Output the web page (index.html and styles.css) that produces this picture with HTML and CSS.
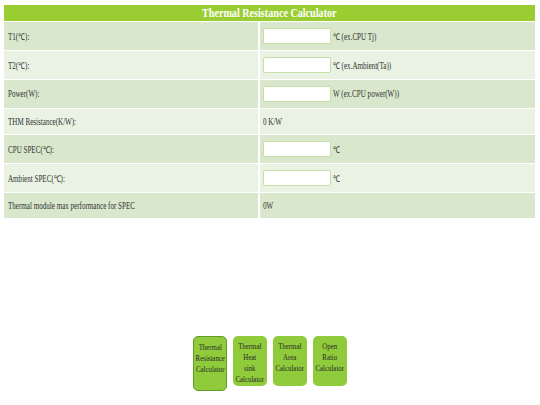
FILE: index.html
```html
<!DOCTYPE html>
<html>
<head>
<meta charset="utf-8">
<link rel="stylesheet" href="styles.css">
</head>
<body>
<div class="page">
  <div class="calc">
    <div class="title"><span class="sq sq-c">Thermal Resistance Calculator</span></div>

    <div class="cell odd tall"><span class="sq">T1(&#8451;):</span></div>
    <div class="cell odd tall val"><span class="box"></span><span class="sq">&#8451; (ex.CPU Tj)</span></div>

    <div class="cell even tall"><span class="sq">T2(&#8451;):</span></div>
    <div class="cell even tall val"><span class="box"></span><span class="sq">&#8451; (ex.Ambient(Ta))</span></div>

    <div class="cell odd tall"><span class="sq">Power(W):</span></div>
    <div class="cell odd tall val"><span class="box"></span><span class="sq">W (ex.CPU power(W))</span></div>

    <div class="cell even short"><span class="sq">THM Resistance(K/W):</span></div>
    <div class="cell even short val"><span class="sq">0 K/W</span></div>

    <div class="cell odd tall"><span class="sq">CPU SPEC(&#8451;):</span></div>
    <div class="cell odd tall val"><span class="box"></span><span class="sq">&#8451;</span></div>

    <div class="cell even tall"><span class="sq">Ambient SPEC(&#8451;):</span></div>
    <div class="cell even tall val"><span class="box"></span><span class="sq">&#8451;</span></div>

    <div class="cell odd short"><span class="sq">Thermal module max performance for SPEC</span></div>
    <div class="cell odd short val"><span class="sq">0W</span></div>
  </div>

  <div class="tabs">
    <div class="tab active"><span class="sq-b">Thermal<br>Resistance<br>Calculator</span></div>
    <div class="tab"><span class="sq-b">Thermal<br>Heat<br>sink<br>Calculator</span></div>
    <div class="tab"><span class="sq-b">Thermal<br>Area<br>Calculator</span></div>
    <div class="tab"><span class="sq-b">Open<br>Ratio<br>Calculator</span></div>
  </div>
</div>
</body>
</html>
```
FILE: styles.css
```css
html, body {
  margin: 0;
  padding: 0;
  background: #ffffff;
}
body {
  font-family: "Liberation Serif", "Times New Roman", serif;
  color: #333333;
}
.page {
  width: 540px;
  height: 405px;
  padding: 5px 5px 0 4px;
  box-sizing: border-box;
  display: flex;
  flex-direction: column;
}
.calc {
  display: grid;
  grid-template-columns: 254px 1fr;
  column-gap: 2px;
  row-gap: 1px;
}
.title {
  grid-column: 1 / 3;
  height: 16px;
  background: #9acd32;
  color: #ffffff;
  font-weight: bold;
  font-size: 13px;
  line-height: 16px;
  text-align: center;
  overflow: hidden;
}
.cell {
  display: flex;
  align-items: center;
  font-size: 9.3px;
  padding-left: 4px;
  white-space: nowrap;
  overflow: hidden;
}
.val {
  padding-left: 3px;
}
.odd { background: #d9e8cd; }
.even { background: #e9f2e3; }
.tall { height: 28px; }
.short { height: 25px; }
.box {
  display: inline-block;
  width: 66px;
  height: 14px;
  background: #ffffff;
  border: 1px solid #c5dfa6;
  border-radius: 2px;
  margin-right: 2px;
  flex: none;
}
.sq {
  display: inline-block;
  transform: scaleX(0.76);
  transform-origin: left center;
}
.sq-c {
  transform: scaleX(0.78);
  transform-origin: center center;
}
.tabs {
  margin-top: 118px;
  display: flex;
  justify-content: center;
  align-items: flex-start;
  gap: 6px;
  padding-left: 1px;
}
.tab {
  width: 34px;
  height: 50px;
  box-sizing: border-box;
  background: #8fcb3a;
  border-radius: 5px;
  font-size: 9px;
  line-height: 11px;
  color: #2a2a2a;
  text-align: center;
  padding-top: 5px;
  display: flex;
  justify-content: center;
  white-space: nowrap;
}
.tab.active {
  height: 55px;
  border: 1px solid #5f9c2a;
}
.sq-b {
  display: inline-block;
  transform: scaleX(0.76);
  transform-origin: center top;
}
```
